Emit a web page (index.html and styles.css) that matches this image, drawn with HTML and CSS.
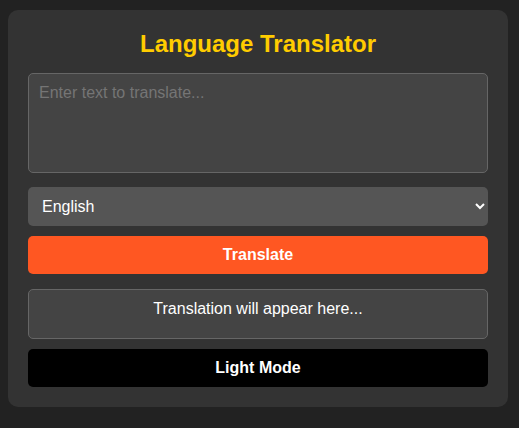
FILE: index.html
```
<!DOCTYPE html>
<html lang="en">
<head>
<meta charset="utf-8">
<title>Language Translator</title>
<link rel="stylesheet" href="styles.css">
</head>
<body>
<div class="card">
  <h2 class="title">Language Translator</h2>
  <textarea class="input" placeholder="Enter text to translate..."></textarea>
  <select class="lang">
    <option>English</option>
    <option>Spanish</option>
    <option>French</option>
  </select>
  <button class="btn btn-translate">Translate</button>
  <div class="output">Translation will appear here...</div>
  <button class="btn btn-mode">Light Mode</button>
</div>
</body>
</html>
```
FILE: styles.css
```
* { box-sizing: border-box; }
html, body { margin: 0; }
body {
  background: #222222;
  padding: 10px 8px;
  font-family: "Liberation Sans", Arial, sans-serif;
  color: #fff;
}
.card {
  width: 500px;
  background: #333333;
  border-radius: 10px;
  padding: 20px;
  display: flex;
  flex-direction: column;
}
.title {
  margin: 0 0 15px;
  font-size: 24px;
  line-height: 28px;
  text-align: center;
  color: #ffcc00;
  font-weight: bold;
}
.input {
  display: block;
  width: 100%;
  height: 100px;
  background: #444444;
  border: 1px solid #666666;
  border-radius: 5px;
  padding: 10px;
  font-family: "Liberation Sans", Arial, sans-serif;
  font-size: 16px;
  color: #fff;
  resize: none;
  margin: 0 0 14px;
}
.input::placeholder { color: #757575; }
.lang {
  display: block;
  width: 100%;
  height: 39px;
  background: #555555;
  border: none;
  border-radius: 5px;
  padding: 0 10px;
  font-family: "Liberation Sans", Arial, sans-serif;
  font-size: 16px;
  color: #fff;
  margin: 0 0 10px;
}
.btn {
  display: block;
  width: 100%;
  height: 38px;
  border: none;
  border-radius: 5px;
  font-family: "Liberation Sans", Arial, sans-serif;
  font-size: 16px;
  font-weight: bold;
  color: #fff;
  padding: 0 10px;
}
.btn-translate { background: #ff5722; margin-bottom: 15px; }
.output {
  height: 50px;
  background: #444444;
  border: 1px solid #666666;
  border-radius: 5px;
  padding: 10px;
  font-size: 16px;
  line-height: 18px;
  text-align: center;
  margin-bottom: 10px;
}
.btn-mode { background: #000000; }
```
